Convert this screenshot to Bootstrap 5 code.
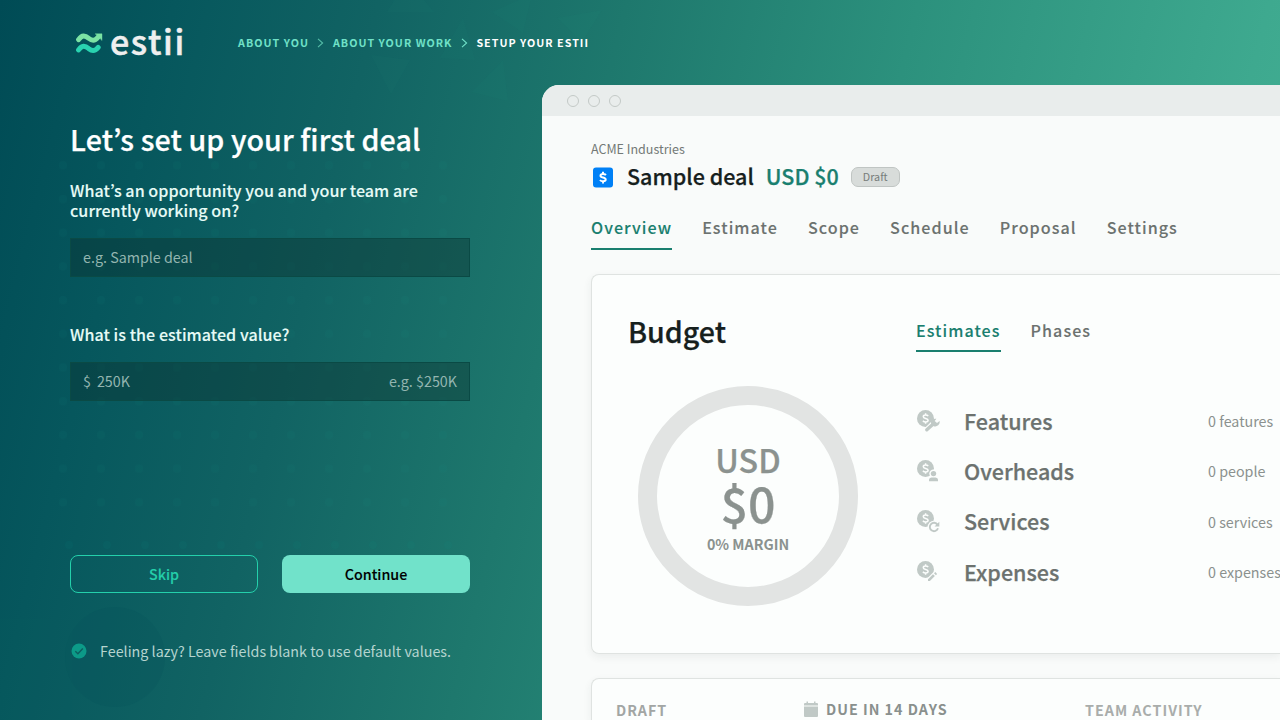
<!DOCTYPE html>
<html lang="en">
<head>
<meta charset="utf-8">
<meta name="viewport" content="width=device-width, initial-scale=1">
<title>Estii – Setup</title>
<link href="https://cdn.jsdelivr.net/npm/bootstrap@5.3.0/dist/css/bootstrap.min.css" rel="stylesheet">
<style>
  :root { --teal: #1a7f6f; --mint: #70e1c8; --ink-soft: #6c726f; }
  body {
    font-family: "Noto Sans CJK KR", "Noto Sans", sans-serif;
    font-size: 14.3px; line-height: 20px; color: #fff;
    width: 1280px; height: 720px;
    background: linear-gradient(104deg, #004b55 0%, #06575d 12%, #116363 26%, #1e786d 43%, #2c917d 63%, #3ea98f 87%, #45b295 100%);
  }
  .backdrop { left: 0; top: 0; z-index: 0; }
  .topbar { height: 85px; padding-left: 76px; }
  .brand-word { font-size: 34px; line-height: 40px; font-weight: 500; color: #efefef; margin: -4px 0 0 7px; width: 76px; letter-spacing: 1.6px; -webkit-text-stroke: .5px #efefef; white-space: nowrap; }
  .crumbs { font-size: 10.74px; font-weight: 700; letter-spacing: 1px; margin-left: 52px; color: var(--mint); line-height: 16px; padding-top: 1px; }
  .crumbs svg { margin: 0 8.7px 0 8.3px; }
  .semi { -webkit-text-stroke: .25px currentColor; }
  .semi-sm { -webkit-text-stroke: .1px currentColor; }
  .setup { width: 542px; padding: 34px 72px 0 70px; }
  .setup h1 { font-size: 28.6px; line-height: 40px; font-weight: 500; margin: 0; letter-spacing: .11px; }
  .setup label { font-size: 16.1px; line-height: 20px; font-weight: 500; color: #e6fbf6; display: block; letter-spacing: .04px; }
  .field { height: 39px; margin-top: 18px; padding: 0 12px 2px; background: rgba(12,42,38,.36); border: 1px solid #0a4a45; color: #93b5b0; }
  .field input { background: transparent; border: 0; outline: 0; padding: 0; color: inherit; font-size: 14.3px; line-height: 20px; min-width: 0; }
  .field input::placeholder { color: #93b5b0; opacity: 1; }
  .act { height: 38px; border-radius: 8px; font-size: 14.3px; line-height: 20px; font-weight: 500; padding: 0; }
  .act-skip, .act-skip:hover { border: 1px solid #24d0ab; color: #24cfaa; }
  .act-go, .act-go:hover { background: #71e2ca; color: #000; border: 0; }
  .hint { margin-top: 48px; color: #b5d4cf; letter-spacing: .015px; }
  .window { width: 738px; height: 635px; background: #f9fbfa; border-radius: 17px 0 0 0; color: var(--ink-soft); }
  .window-bar { height: 31px; background: #e9edec; padding-left: 25px; gap: 9px; }
  .window-bar i { width: 12px; height: 12px; border: 1px solid #c3c9c6; border-radius: 50%; }
  .window-body { padding: 23px 0 0 49px; }
  .client { font-size: 12.53px; line-height: 20px; color: #737976; }
  .deal { font-size: 21.5px; line-height: 28px; font-weight: 500; margin-top: 3px; white-space: nowrap; }
  .deal svg { margin-top: 3px; }
  .deal-name { color: #16201d; margin-left: 12px; }
  .deal-sum { color: var(--teal); margin-left: 12px; }
  .status { font-size: 10.74px; line-height: 18px; font-weight: 400; height: 20px; border: 1px solid #c0c5c3; background: #d8dcda; color: #777d7a; border-radius: 7px; padding: 0 11px; margin: 1px 0 0 12px; }
  .tabs { gap: 30.100px; font-size: 16.1px; font-weight: 500; letter-spacing: 1.04px; line-height: 24px; }
  .tabs a { color: var(--ink-soft); text-decoration: none; padding-bottom: 9px; border-bottom: 2px solid transparent; white-space: nowrap; }
  .tabs a.current { color: var(--teal); border-color: var(--teal); }
  .panel { margin-top: 24px; background: #fcfefd; border: 1px solid #dfe3e1; border-right: 0; border-radius: 8px 0 0 8px; box-shadow: 0 3px 8px rgba(40,60,55,.07); }
  .budget { height: 379.5px; padding: 36px 0 0 36px; }
  .budget h2 { font-size: 28.6px; line-height: 40px; font-weight: 500; margin: 0; color: #16201d; }
  .budget-left { width: 288px; }
  .ring { width: 220px; height: 220px; border: 19px solid #e2e4e3; border-radius: 50%; margin: 35.4px 0 0 10px; color: #8b928f; font-weight: 500; }
  .ring-cur { font-size: 32.2px; line-height: 40px; margin-top: 33.5px; }
  .ring-sum { font-size: 48.3px; line-height: 46px; margin-top: .5px; }
  .ring-margin { font-weight: 700; line-height: 20px; margin-top: 9px; }
  .budget .tabs a { padding-bottom: 8px; }
  .cost { height: 50.4px; }
  .cost svg { width: 24px; height: 24px; }
  .cost-name { font-size: 21.5px; line-height: 30px; font-weight: 500; margin-left: 24px; width: 244px; }
  .cost-count { color: #8b918e; white-space: nowrap; }
  .foot { border-bottom: 0; border-radius: 8px 0 0 0; height: 43px; padding: 20px 0 0 24px; font-weight: 700; letter-spacing: 1px; overflow: hidden; white-space: nowrap; }
</style>
</head>
<body class="overflow-hidden position-relative">
<svg class="backdrop position-absolute" width="1280" height="720" aria-hidden="true">
  <defs><pattern id="dots" x="44" y="148.3" width="38" height="33.7" patternUnits="userSpaceOnUse"><circle cx="19" cy="17" r="4" fill="#159c8c" fill-opacity=".06"/></pattern></defs>
  <rect x="44" y="148.3" width="418" height="371" fill="url(#dots)"/>
  <g fill="#159c8c" fill-opacity=".07"><circle cx="69" cy="545" r="4"/><circle cx="107" cy="545" r="4"/><circle cx="145" cy="545" r="4"/><circle cx="183" cy="545" r="4"/><circle cx="221" cy="545" r="4"/><circle cx="259" cy="545" r="4"/><circle cx="297" cy="545" r="4"/><circle cx="335" cy="545" r="4"/><circle cx="373" cy="545" r="4"/><circle cx="411" cy="545" r="4"/><circle cx="448" cy="545" r="4"/></g>
  <g fill="#2a9c90" fill-opacity=".05"><path d="M387 12H434L407-20zM492 12 532-6 523 33zM557 18 602 10 582 42zM463 18 440 58 475 60zM371 55 410 60 391 94zM503 60 472 92 508 101z"/></g>
  <circle cx="115" cy="657" r="50" fill="#064e58" fill-opacity=".2"/>
  <path d="M0 619H72V720H0z" fill="#0e6466" fill-opacity=".1"/>
</svg>

<header class="topbar d-flex align-items-center position-relative">
  <svg width="27" height="22" viewBox="0 0 27 22" fill="none" stroke-width="5" stroke-linecap="round" stroke-linejoin="round" style="margin-top:1px" aria-hidden="true">
    <path d="M2.6 7.6C6 2.8 9 3.2 12.8 6.4 16.4 9.2 19 9 22 5.2" stroke="#7be3a4"/>
    <path d="M19.4 1.8H26V8.200z" fill="#7be3a4" stroke="#7be3a4" stroke-width=".4"/>
    <path d="M2.6 17.9C6 13.1 9 13.5 12.8 16.7 16.4 19.5 19 19.3 22.2 15.4" stroke="#29d3b0"/>
  </svg>
  <span class="brand-word">estii</span>
  <nav class="crumbs d-flex align-items-center">
    <span>ABOUT YOU</span>
    <svg width="7" height="10" viewBox="0 0 7 10" fill="none" stroke="#55bda8" stroke-width="1.1"><path d="M1 .8 5.6 5 1 9.2"/></svg>
    <span>ABOUT YOUR WORK</span>
    <svg width="7" height="10" viewBox="0 0 7 10" fill="none" stroke="#70e1c8" stroke-width="1.1"><path d="M1 .8 5.6 5 1 9.2"/></svg>
    <span class="text-white">SETUP YOUR ESTII</span>
  </nav>
</header>

<main class="d-flex position-relative">
  <form class="setup flex-shrink-0">
    <h1 class="semi">Let’s set up your first deal</h1>
    <label class="semi-sm" for="deal" style="margin-top:21px">What’s an opportunity you and your team are currently working on?</label>
    <div class="field d-flex align-items-center"><input id="deal" class="w-100" placeholder="e.g. Sample deal"></div>
    <label class="semi-sm" for="value" style="margin-top:47px">What is the estimated value?</label>
    <div class="field d-flex align-items-center"><span>$</span><input id="value" class="flex-grow-1" style="margin-left:6px" placeholder="250K"><span>e.g. $250K</span></div>
    <div class="d-flex gap-4" style="margin-top:154px">
      <button type="button" class="btn act act-skip semi-sm flex-fill w-50">Skip</button>
      <button type="button" class="btn act act-go semi-sm flex-fill w-50">Continue</button>
    </div>
    <div class="hint d-flex align-items-center">
      <svg width="18" height="18" viewBox="0 0 18 18" style="margin-right:12px" aria-hidden="true"><circle cx="9" cy="9" r="7.5" fill="#0c9a88"/><path d="M5.3 9.3 7.9 11.8 12.8 6.6" fill="none" stroke="#0d5e60" stroke-width="1.4"/></svg>
      <span>Feeling lazy? Leave fields blank to use default values.</span>
    </div>
  </form>

  <section class="window flex-shrink-0 overflow-hidden">
    <div class="window-bar d-flex align-items-center"><i></i><i></i><i></i></div>
    <div class="window-body">
      <div class="client">ACME Industries</div>
      <div class="deal d-flex align-items-center">
        <svg width="24" height="24" viewBox="0 0 24 24" aria-hidden="true"><rect x="2" y="1.5" width="20" height="20" rx="3" fill="#0080f6"/><path d="M14.9 9.1C14.2 8.2 13 8 12 8c-1.500 0-2.500.7-2.500 1.700 0 2.600 5.200 1.100 5.200 3.900 0 1.100-1.100 1.700-2.600 1.700-1.200 0-2.400-.4-3.100-1.300M12 5.700V8M12 15.300v2.100" fill="none" stroke="#fff" stroke-width="2"/></svg>
        <span class="deal-name semi">Sample deal</span>
        <span class="deal-sum semi">USD $0</span>
        <span class="status">Draft</span>
      </div>
      <nav class="tabs semi-sm d-flex" style="margin-top:25px">
        <a class="current" href="#">Overview</a><a href="#">Estimate</a><a href="#">Scope</a><a href="#">Schedule</a><a href="#">Proposal</a><a href="#">Settings</a>
      </nav>

      <div class="panel budget d-flex">
        <div class="budget-left flex-shrink-0">
          <h2 class="semi">Budget</h2>
          <div class="ring text-center">
            <div class="ring-cur semi">USD</div>
            <div class="ring-sum semi">$0</div>
            <div class="ring-margin">0% MARGIN</div>
          </div>
        </div>
        <div class="flex-grow-1" style="padding-top:7px">
          <nav class="tabs semi-sm d-flex"><a class="current" href="#">Estimates</a><a href="#">Phases</a></nav>
          <div style="padding-top:43.500px">
            <div class="cost d-flex align-items-center">
              <svg viewBox="0 0 24 24"><use href="#coin"/><path d="M9.800 22.500 17.500 15" stroke="#fcfefd" stroke-width="6.500"/><path d="M10.800 20.800 17.800 14.500" stroke="#c0c9c6" stroke-width="3.400" stroke-linecap="round"/><path d="M20.400 9.800A4.300 4.300 0 0 0 15 14.500L17.700 17.200A4.500 4.500 0 0 0 23.600 12L21 14.100 18.700 12z" fill="#c0c9c6"/></svg>
              <span class="cost-name semi">Features</span><span class="cost-count">0 features</span>
            </div>
            <div class="cost d-flex align-items-center">
              <svg viewBox="0 0 24 24"><use href="#coin"/><circle cx="17.500" cy="14.600" r="4.200" fill="#fcfefd"/><circle cx="17.500" cy="14.600" r="2.700" fill="#c0c9c6"/><path d="M13 22.300V20.600C13 18.900 14.400 18.400 17.500 18.400S22 18.900 22 20.600V22.300z" fill="#c0c9c6" stroke="#fcfefd" stroke-width="1" paint-order="stroke"/></svg>
              <span class="cost-name semi">Overheads</span><span class="cost-count">0 people</span>
            </div>
            <div class="cost d-flex align-items-center">
              <svg viewBox="0 0 24 24"><use href="#coin"/><circle cx="18" cy="18" r="6.300" fill="#fcfefd"/><path d="M21.500 15.600A4.200 4.200 0 1 0 22 19.300" fill="none" stroke="#c0c9c6" stroke-width="1.900"/><path d="M23.300 12.800V17.500H18.600z" fill="#c0c9c6"/></svg>
              <span class="cost-name semi">Services</span><span class="cost-count" style="padding-top:1px">0 services</span>
            </div>
            <div class="cost d-flex align-items-center">
              <svg viewBox="0 0 24 24"><use href="#coin"/><path d="M11.500 22 19.500 14" stroke="#fcfefd" stroke-width="5.500"/><path d="M12 19.200 17 14.200 18.900 16.100 13.900 21.100H12zM18 13.300 19.300 12.100 21.100 13.900 19.900 15.200z" fill="#c0c9c6"/></svg>
              <span class="cost-name semi">Expenses</span><span class="cost-count">0 expenses</span>
            </div>
          </div>
        </div>
      </div>

      <div class="panel foot d-flex">
        <span style="width:187px;color:#a2a6a4;padding-top:1px">DRAFT</span>
        <svg width="16" height="18" viewBox="0 0 16 18" style="margin-top:2px"><path d="M3.500 .5H5V2h6V.5h1.500V2H14a1 1 0 0 1 1 1v1.500H1V3a1 1 0 0 1 1-1h1.500zM1 5.500H15V15a1 1 0 0 1-1 1H2a1 1 0 0 1-1-1z" fill="#c0c9c6"/></svg>
        <span style="width:259px;margin-left:7px;color:#89908d">DUE IN 14 DAYS</span>
        <span style="color:#a9adab;padding-top:1px">TEAM ACTIVITY</span>
      </div>
    </div>
  </section>
</main>

<svg width="0" height="0" class="position-absolute" aria-hidden="true"><defs>
  <g id="coin"><circle cx="9.500" cy="9.500" r="8.500" fill="#c0c9c6"/><path d="M12.200 7.100C11.600 6.300 10.500 6.100 9.600 6.100c-1.300 0-2.300.6-2.300 1.600 0 2.500 4.800 1.100 4.800 3.600 0 1-1 1.600-2.400 1.600-1.100 0-2.200-.4-2.800-1.200M9.600 4.200v2M9.600 12.800v2" fill="none" stroke="#fcfefd" stroke-width="1.500"/></g>
</defs></svg>
<script src="https://cdn.jsdelivr.net/npm/bootstrap@5.3.0/dist/js/bootstrap.bundle.min.js"></script>
</body>
</html>
